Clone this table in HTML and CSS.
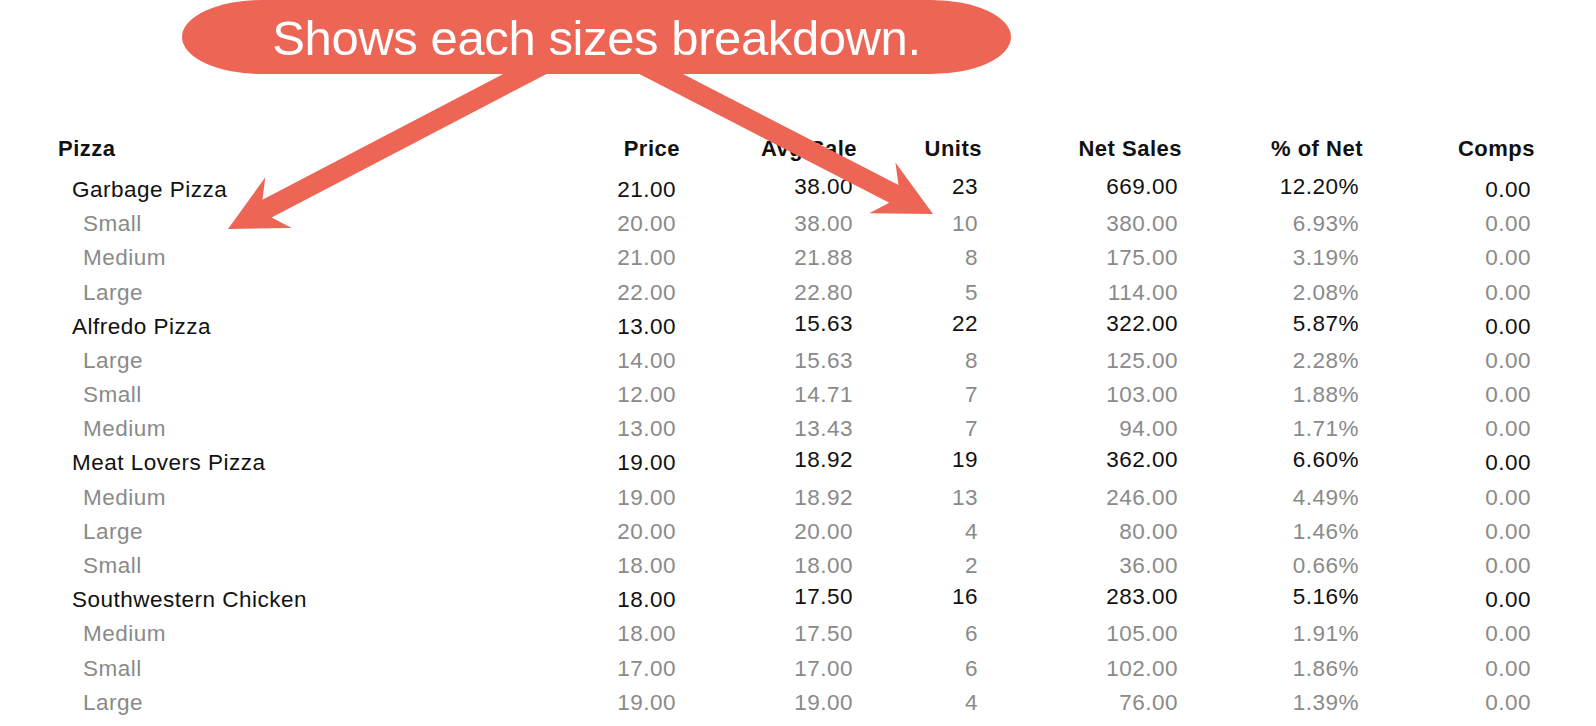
FILE: index.html
```html
<!DOCTYPE html>
<html>
<head>
<meta charset="utf-8">
<link rel="stylesheet" href="styles.css">
</head>
<body>
<div class="page">
  <div class="callout"><span class="callout-text">Shows each sizes breakdown.</span></div>
  <svg class="arrows" width="1596" height="726" viewBox="0 0 1596 726">
    <polygon fill="#ec6555" points="228,229 265.3,177.3 262.4,199.8 545,52.2 554.2,70 271.6,217.5 291.8,228"/>
    <polygon fill="#ec6555" points="933,214 895.4,162.5 898.5,185 629.1,46.2 619.9,64 889.3,202.7 869.2,213.3"/>
  </svg>
  <div class="report">
    <div class="row head">
      <div class="name">Pizza</div><div class="num">Price</div><div class="num">Avg Sale</div><div class="num">Units</div><div class="num">Net Sales</div><div class="num">% of Net</div><div class="num">Comps</div>
    </div>

    <div class="row item">
      <div class="name">Garbage Pizza</div><div class="num">21.00</div><div class="num up">38.00</div><div class="num up">23</div><div class="num up">669.00</div><div class="num up">12.20%</div><div class="num">0.00</div>
    </div>
    <div class="row size">
      <div class="name">Small</div><div class="num">20.00</div><div class="num">38.00</div><div class="num">10</div><div class="num">380.00</div><div class="num">6.93%</div><div class="num">0.00</div>
    </div>
    <div class="row size">
      <div class="name">Medium</div><div class="num">21.00</div><div class="num">21.88</div><div class="num">8</div><div class="num">175.00</div><div class="num">3.19%</div><div class="num">0.00</div>
    </div>
    <div class="row size">
      <div class="name">Large</div><div class="num">22.00</div><div class="num">22.80</div><div class="num">5</div><div class="num">114.00</div><div class="num">2.08%</div><div class="num">0.00</div>
    </div>

    <div class="row item">
      <div class="name">Alfredo Pizza</div><div class="num">13.00</div><div class="num up">15.63</div><div class="num up">22</div><div class="num up">322.00</div><div class="num up">5.87%</div><div class="num">0.00</div>
    </div>
    <div class="row size">
      <div class="name">Large</div><div class="num">14.00</div><div class="num">15.63</div><div class="num">8</div><div class="num">125.00</div><div class="num">2.28%</div><div class="num">0.00</div>
    </div>
    <div class="row size">
      <div class="name">Small</div><div class="num">12.00</div><div class="num">14.71</div><div class="num">7</div><div class="num">103.00</div><div class="num">1.88%</div><div class="num">0.00</div>
    </div>
    <div class="row size">
      <div class="name">Medium</div><div class="num">13.00</div><div class="num">13.43</div><div class="num">7</div><div class="num">94.00</div><div class="num">1.71%</div><div class="num">0.00</div>
    </div>

    <div class="row item">
      <div class="name">Meat Lovers Pizza</div><div class="num">19.00</div><div class="num up">18.92</div><div class="num up">19</div><div class="num up">362.00</div><div class="num up">6.60%</div><div class="num">0.00</div>
    </div>
    <div class="row size">
      <div class="name">Medium</div><div class="num">19.00</div><div class="num">18.92</div><div class="num">13</div><div class="num">246.00</div><div class="num">4.49%</div><div class="num">0.00</div>
    </div>
    <div class="row size">
      <div class="name">Large</div><div class="num">20.00</div><div class="num">20.00</div><div class="num">4</div><div class="num">80.00</div><div class="num">1.46%</div><div class="num">0.00</div>
    </div>
    <div class="row size">
      <div class="name">Small</div><div class="num">18.00</div><div class="num">18.00</div><div class="num">2</div><div class="num">36.00</div><div class="num">0.66%</div><div class="num">0.00</div>
    </div>

    <div class="row item">
      <div class="name">Southwestern Chicken</div><div class="num">18.00</div><div class="num up">17.50</div><div class="num up">16</div><div class="num up">283.00</div><div class="num up">5.16%</div><div class="num">0.00</div>
    </div>
    <div class="row size">
      <div class="name">Medium</div><div class="num">18.00</div><div class="num">17.50</div><div class="num">6</div><div class="num">105.00</div><div class="num">1.91%</div><div class="num">0.00</div>
    </div>
    <div class="row size">
      <div class="name">Small</div><div class="num">17.00</div><div class="num">17.00</div><div class="num">6</div><div class="num">102.00</div><div class="num">1.86%</div><div class="num">0.00</div>
    </div>
    <div class="row size">
      <div class="name">Large</div><div class="num">19.00</div><div class="num">19.00</div><div class="num">4</div><div class="num">76.00</div><div class="num">1.39%</div><div class="num">0.00</div>
    </div>
  </div>
</div>
</body>
</html>
```

FILE: styles.css
```css
html, body {
  margin: 0;
  padding: 0;
  background: #ffffff;
}

body {
  font-family: "Liberation Sans", Arial, Helvetica, sans-serif;
  color: #111111;
  width: 1596px;
  height: 726px;
  overflow: hidden;
}

.page {
  position: relative;
  width: 1596px;
  height: 726px;
}

.callout {
  position: relative;
  z-index: 3;
  margin-left: 182px;
  width: 829px;
  height: 74px;
  background: #ec6555;
  border-radius: 80px / 37px;
  display: flex;
  align-items: center;
  justify-content: center;
}

.callout-text {
  color: #ffffff;
  font-size: 49px;
  letter-spacing: -0.4px;
  line-height: 1;
  white-space: nowrap;
  padding-top: 2px;
}

.arrows {
  position: absolute;
  left: 0;
  top: 0;
  z-index: 2;
  pointer-events: none;
}

.report {
  position: relative;
  z-index: 1;
  margin-top: 58px;
  padding-left: 58px;
}

.row {
  display: grid;
  grid-template-columns: 522px 100px 177px 125px 200px 181px 172px;
  align-items: center;
  height: 34.2px;
  white-space: nowrap;
}

.row .num {
  text-align: right;
}

.head {
  font-weight: bold;
  font-size: 22px;
  letter-spacing: 0.5px;
  color: #111111;
  margin-bottom: 6.7px;
}

.item,
.size {
  font-size: 22.5px;
  letter-spacing: 0.5px;
}

.item .num,
.size .num {
  padding-right: 4px;
}

.item {
  color: #111111;
}

.item .name {
  padding-left: 14px;
}

.item .up {
  padding-bottom: 6px;
}

.size {
  color: #8a8a8a;
}

.size .name {
  padding-left: 25px;
}
```
